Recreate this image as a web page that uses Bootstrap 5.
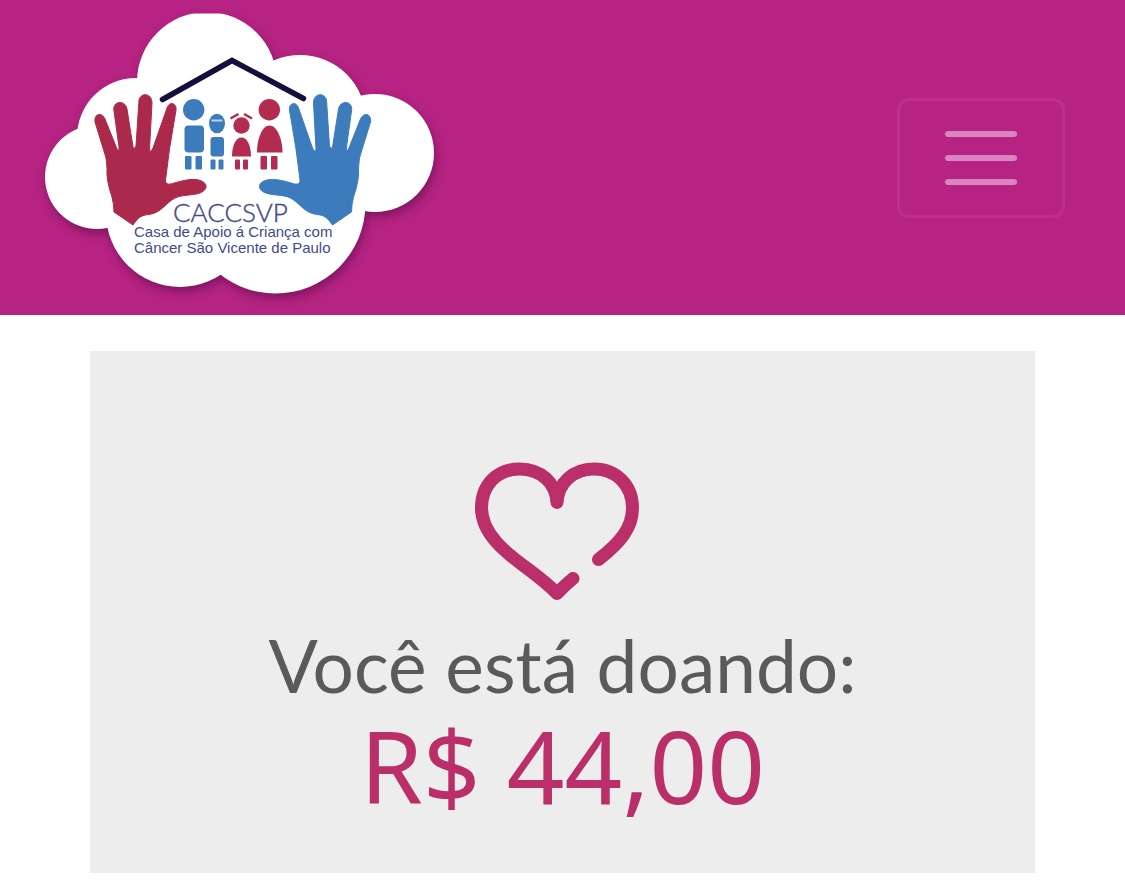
<!DOCTYPE html>
<html lang="pt-BR">
<head>
<meta charset="utf-8">
<meta name="viewport" content="width=device-width, initial-scale=1">
<title>CACCSVP - Doação</title>
<link href="https://cdn.jsdelivr.net/npm/bootstrap@5.3.0/dist/css/bootstrap.min.css" rel="stylesheet">
<style>
  body { font-family: Lato, "Noto Sans", sans-serif; background: #fff; }
  .site-nav { background: #b62382; padding: 0 60px 0 30px; }
  .logo-art { display: block; width: 420px; height: 315px; }
  .cloud { filter: drop-shadow(2px 5px 5px rgba(50, 0, 50, .4)); }
  .site-nav .navbar-toggler { padding: 12px 36px; border: 3px solid #bd2f8d; border-radius: 12px; }
  .menu-icon { display: block; width: 90px; height: 90px; }
  .page-body { padding: 36px 90px 16px; }
  .donation { background: #ededed; padding: 105px 16px 50px; }
  .heart-art { display: block; width: 176px; height: 150px; margin-right: 12px; }
  .donation-label { color: #595a5a; font-size: 73px; line-height: 86px; margin: 16px 0 0; }
  .donation-value { color: #ba2f69; font-family: "Noto Sans", sans-serif; font-size: 101px; line-height: 115px; margin: 0; }
</style>
</head>
<body>
<header>
  <nav class="navbar site-nav">
    <a class="navbar-brand p-0 m-0" href="#" aria-label="CACCSVP">
      <svg class="logo-art" viewBox="30 0 420 315">
        <defs>
          <clipPath id="top-edge"><path d="M30 13.500H450V315H30Z"/></clipPath>
          <path id="hand" d="M95 122C94 113 102 112 105 119L117 149Q119 153 119 147L114 111C112 101 125 99 127 109L133 147Q134 150 136 146L139 100C141 92 152 93 152 103L149.500 149Q150 154 153 148L167 108C170 100 177 104 176 110L169.500 149L165.500 180Q165 185 171 184C181 181 188 179 196 179.500C207 181 209 188 202 192C195 196 183 194 175 198C166 203 162 211 153 213.500C145 216 141 213 133 225L114 212Q114 205 112 197Q106 180 107 168Q107 158 103 148Z"/>
        </defs>
        <g class="cloud">
          <g fill="#fff" clip-path="url(#top-edge)">
            <circle cx="207" cy="82" r="70"/>
            <circle cx="136" cy="137" r="59"/>
            <circle cx="97" cy="177" r="52"/>
            <circle cx="180" cy="213" r="74"/>
            <circle cx="275.500" cy="203.500" r="90"/>
            <circle cx="375" cy="153" r="59"/>
            <circle cx="300" cy="121" r="66"/>
            <path d="M137 90H320L375 150L340 230H120L90 170Z"/>
          </g>
        </g>
        <path d="M162.500 99.500L232 60.500L303.500 98.500" fill="none" stroke="#160f3d" stroke-width="5.500" stroke-linecap="round"/>
        <use href="#hand" fill="#aa294d" stroke="#aa294d"/>
        <use href="#hand" fill="#3d7cbc" stroke="#3d7cbc" transform="translate(465.500 0) scale(-1 1)"/>
        <g fill="#3d7cbc">
          <circle cx="193.700" cy="109.800" r="10.700"/>
          <rect x="184.500" y="125.500" width="19.500" height="27" rx="4"/>
          <rect x="185" y="156" width="6.500" height="13.500" rx="1"/><rect x="195.500" y="156" width="6.500" height="13.500" rx="1"/>
          <ellipse cx="217" cy="123.500" rx="8" ry="9.800"/>
          <rect x="210.500" y="137" width="13.500" height="19.500" rx="3"/>
          <rect x="210.500" y="159.500" width="5" height="10" rx="1"/><rect x="218.500" y="159.500" width="5" height="10" rx="1"/>
        </g>
        <path d="M211.500 120.500H222.500" stroke="#b9d3ec" stroke-width="2"/>
        <g fill="#b32b50">
          <circle cx="241.500" cy="125.500" r="8.200"/>
          <path d="M232 156.500C232 145 236 137.500 241.500 137.500S251 145 251 156.500Z"/>
          <rect x="235" y="159.500" width="5" height="10" rx="1"/><rect x="243" y="159.500" width="5" height="10" rx="1"/>
          <circle cx="269.300" cy="109.800" r="10.700"/>
          <path d="M257 152.500C257 139 262 125.500 269.500 125.500S282.500 139 282.500 152.500Z"/>
          <rect x="260.500" y="156" width="6.500" height="13.500" rx="1"/><rect x="271" y="156" width="6.500" height="13.500" rx="1"/>
        </g>
        <path d="M230.500 118.500L238.500 114M244 114L252 118.500" stroke="#b32b50" stroke-width="2.500"/>
        <g fill="#424b88">
          <text x="173" y="222" font-family="Lato, sans-serif" font-size="26" font-weight="300" stroke="#424b88" stroke-width=".4">CACCSVP</text>
          <g font-family="'Liberation Sans', Arial, sans-serif" font-size="15">
            <text x="134" y="237">Casa de Apoio á Criança com</text>
            <text x="134" y="253">Câncer São Vicente de Paulo</text>
          </g>
        </g>
      </svg>
    </a>
    <button class="navbar-toggler" type="button" aria-label="Abrir menu">
      <svg class="menu-icon" viewBox="0 0 30 30" fill="none" stroke="#d985c2" stroke-width="2" stroke-linecap="round"><path d="M4 7H26M4 15H26M4 23H26"/></svg>
    </button>
  </nav>
</header>
<main class="page-body">
  <section class="donation d-flex flex-column align-items-center text-center">
    <svg class="heart-art" viewBox="469 456 176 150" fill="none" stroke="#ba2f69" stroke-width="13" stroke-linecap="round" stroke-linejoin="round" aria-hidden="true">
      <path d="M598.500 559.500C620 543 632.500 528 632.500 508C632.500 485 616 469 594 469C573 469 558 483 557 502.500C556 483 541 469 519.500 469C497 469 481.500 485 481.500 508C481.500 534 506 553 528 569C540 578 548 584 557 593.500Q565 585 573 578.500"/>
    </svg>
    <h1 class="donation-label fw-normal">Você está doando:</h1>
    <p class="donation-value">R$ 44,00</p>
  </section>
</main>
<script src="https://cdn.jsdelivr.net/npm/bootstrap@5.3.0/dist/js/bootstrap.bundle.min.js"></script>
</body>
</html>
